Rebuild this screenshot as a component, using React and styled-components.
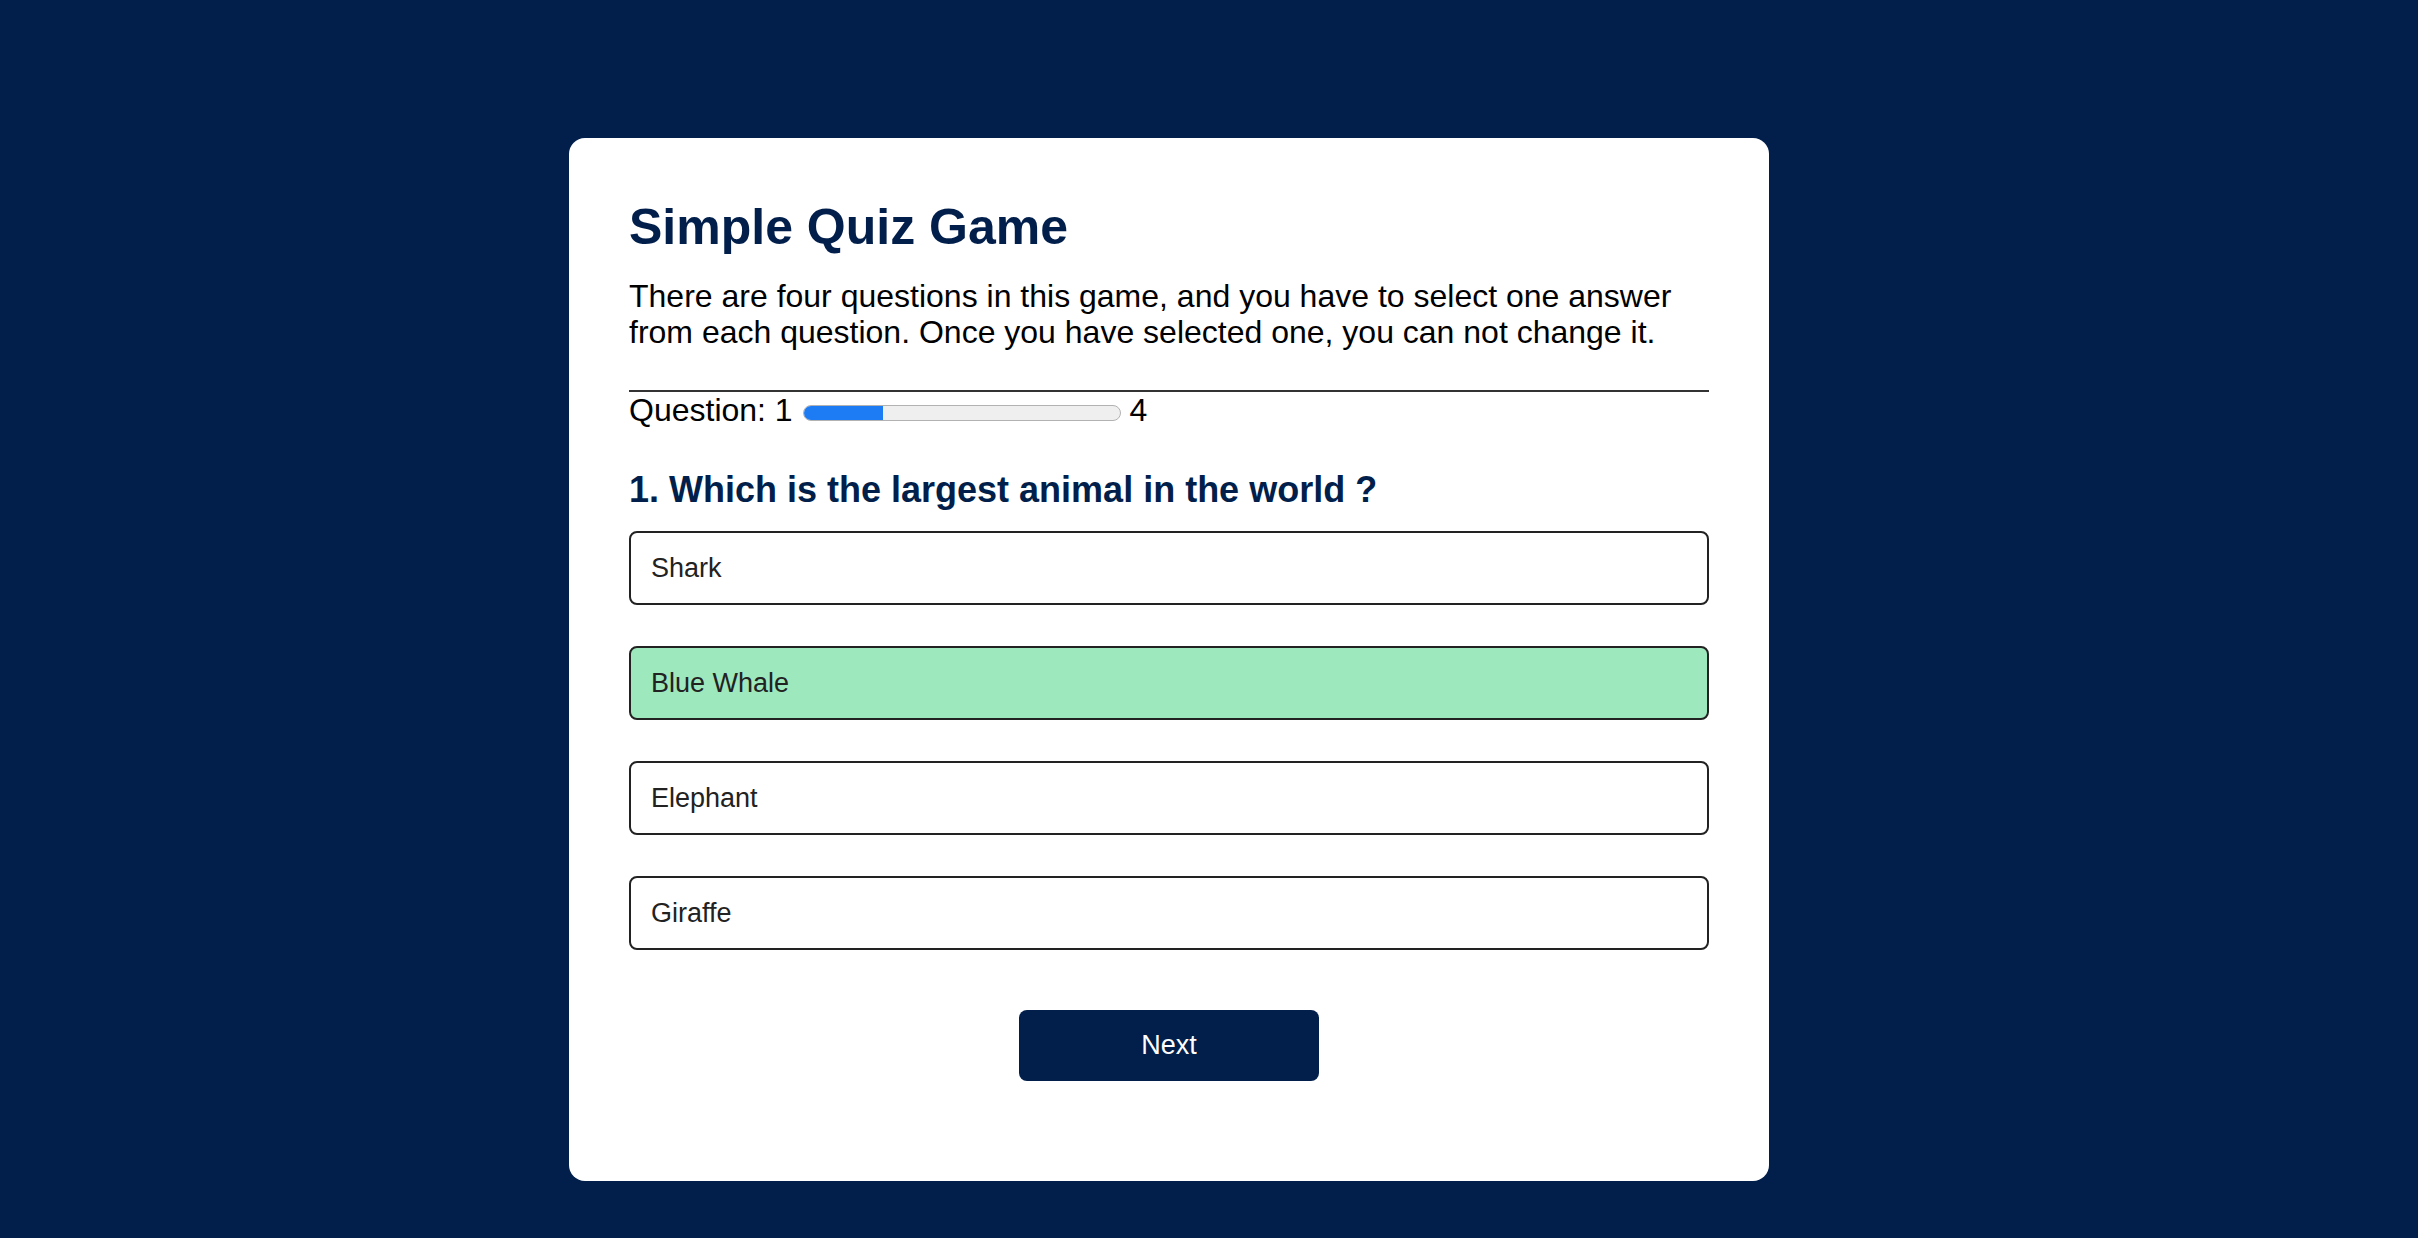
import React from 'react'
import styled, { createGlobalStyle } from 'styled-components'

const GlobalStyle = createGlobalStyle`
  html, body {
    margin: 0;
    padding: 0;
    background: #021f4b;
    font-family: "Liberation Sans", Arial, Helvetica, sans-serif;
  }
`;

const Pagina = styled.main`
  min-height: 1238px;
  box-sizing: border-box;
  padding: 138px 0 0 569px;
`;

const Cartao = styled.section`
  width: 1200px;
  box-sizing: border-box;
  background: #ffffff;
  border-radius: 16px;
  padding: 60px 60px 60px 60px;
`;

const Titulo = styled.h1`
  margin: 0 0 22px;
  font-size: 50px;
  line-height: 58px;
  font-weight: 700;
  color: #021f4b;
`;

const Descricao = styled.p`
  margin: 0 0 40px;
  font-size: 32px;
  line-height: 36px;
  color: #000000;
`;

const Divisor = styled.hr`
  margin: 0;
  border: none;
  height: 2px;
  background: #333333;
`;

const LinhaProgresso = styled.div`
  font-size: 32px;
  line-height: 36px;
  color: #000000;
  margin-bottom: 41px;
`;

const Barra = styled.span`
  display: inline-block;
  vertical-align: baseline;
  box-sizing: border-box;
  width: 318px;
  height: 16px;
  margin-left: 1px;
  border: 1px solid #b2b2b2;
  border-radius: 8px;
  background: #efefef;
  overflow: hidden;
`;

const Preenchimento = styled.span`
  display: block;
  height: 100%;
  background: #1d7bf3;
`;

const Pergunta = styled.h2`
  margin: 0 0 20px;
  font-size: 36px;
  line-height: 42px;
  font-weight: 700;
  color: #021f4b;
`;

const ListaOpcoes = styled.div`
  display: flex;
  flex-direction: column;
  gap: 41px;
`;

const Opcao = styled.div`
  display: flex;
  align-items: center;
  box-sizing: border-box;
  height: 74px;
  padding: 0 20px;
  border: 2px solid #222222;
  border-radius: 8px;
  background: ${props => (props.$correta ? '#9ee8be' : '#ffffff')};
  font-size: 27px;
  line-height: 30px;
  color: #222222;
`;

const Rodape = styled.div`
  display: flex;
  justify-content: center;
  margin: 60px 0 40px;
`;

const BotaoProximo = styled.button`
  width: 300px;
  height: 71px;
  border: none;
  border-radius: 8px;
  background: #021f4b;
  color: #ffffff;
  font-family: "Liberation Sans", Arial, Helvetica, sans-serif;
  font-size: 27px;
  cursor: pointer;
`;

const opcoes = ['Shark', 'Blue Whale', 'Elephant', 'Giraffe'];

export default function App() {
  const atual = 1;
  const total = 4;
  return (
    <>
      <GlobalStyle />
      <Pagina>
        <Cartao>
          <Titulo>Simple Quiz Game</Titulo>
          <Descricao>
            There are four questions in this game, and you have to select one answer
            from each question. Once you have selected one, you can not change it.
          </Descricao>
          <Divisor />
          <LinhaProgresso>
            Question: {atual}{' '}
            <Barra>
              <Preenchimento style={{ width: `${(atual / total) * 100}%` }} />
            </Barra>{' '}
            {total}
          </LinhaProgresso>
          <Pergunta>1. Which is the largest animal in the world ?</Pergunta>
          <ListaOpcoes>
            {opcoes.map(opcao => (
              <Opcao key={opcao} $correta={opcao === 'Blue Whale'}>
                {opcao}
              </Opcao>
            ))}
          </ListaOpcoes>
          <Rodape>
            <BotaoProximo>Next</BotaoProximo>
          </Rodape>
        </Cartao>
      </Pagina>
    </>
  )
}
